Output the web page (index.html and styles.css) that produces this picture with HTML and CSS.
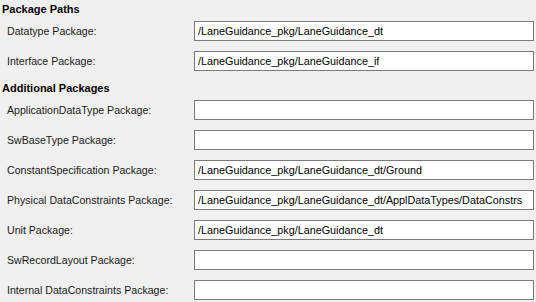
FILE: index.html
```html
<!DOCTYPE html>
<html lang="en">

<head>
    <meta charset="UTF-8">
    <meta name="viewport" content="width=device-width, initial-scale=1.0">
    <title>Package Paths</title>
    <link rel="stylesheet" href="styles.css">
</head>

<body>
    <div class="painel">
        <!-- Package Paths -->
        <div class="secao secao-primeira">Package Paths</div>
        <div class="linha">
            <label class="rotulo">Datatype Package:</label>
            <input class="campo" type="text" value="/LaneGuidance_pkg/LaneGuidance_dt">
        </div>
        <div class="linha">
            <label class="rotulo">Interface Package:</label>
            <input class="campo" type="text" value="/LaneGuidance_pkg/LaneGuidance_if">
        </div>

        <!-- Additional Packages -->
        <div class="secao">Additional Packages</div>
        <div class="linha">
            <label class="rotulo">ApplicationDataType Package:</label>
            <input class="campo" type="text" value="">
        </div>
        <div class="linha">
            <label class="rotulo">SwBaseType Package:</label>
            <input class="campo" type="text" value="">
        </div>
        <div class="linha">
            <label class="rotulo">ConstantSpecification Package:</label>
            <input class="campo" type="text" value="/LaneGuidance_pkg/LaneGuidance_dt/Ground">
        </div>
        <div class="linha">
            <label class="rotulo">Physical DataConstraints Package:</label>
            <input class="campo" type="text" value="/LaneGuidance_pkg/LaneGuidance_dt/ApplDataTypes/DataConstrs">
        </div>
        <div class="linha">
            <label class="rotulo">Unit Package:</label>
            <input class="campo" type="text" value="/LaneGuidance_pkg/LaneGuidance_dt">
        </div>
        <div class="linha">
            <label class="rotulo">SwRecordLayout Package:</label>
            <input class="campo" type="text" value="">
        </div>
        <div class="linha">
            <label class="rotulo">Internal DataConstraints Package:</label>
            <input class="campo" type="text" value="">
        </div>
    </div>
</body>

</html>
```

FILE: styles.css
```css
/* Configuração geral */
body {
    margin: 0;
    padding: 0;
    font-family: 'Liberation Sans', Arial, sans-serif;
    font-size: 10.6px;
    background: #f0f0f0;
    color: #1a1a1a;
}

.painel {
    width: 536px;
    padding-right: 2px;
    box-sizing: border-box;
}

/* Títulos das seções */
.secao {
    font-weight: bold;
    font-size: 11px;
    color: #000;
    height: 19px;
    line-height: 16px;
    padding: 4px 0 0 2px;
    box-sizing: border-box;
}

.secao-primeira {
    height: 16px;
    padding-top: 1px;
}

/* Linhas com rótulo e campo */
.linha {
    display: grid;
    grid-template-columns: 194px 1fr;
    align-items: center;
    height: 30px;
}

.rotulo {
    padding-left: 7px;
}

.campo {
    height: 20px;
    box-sizing: border-box;
    margin: 0;
    padding: 0 3px;
    border: 1px solid #7a7a7a;
    border-radius: 0;
    background: #fff;
    font-family: 'Liberation Sans', Arial, sans-serif;
    font-size: 10.8px;
    color: #000;
    outline: none;
}
```
